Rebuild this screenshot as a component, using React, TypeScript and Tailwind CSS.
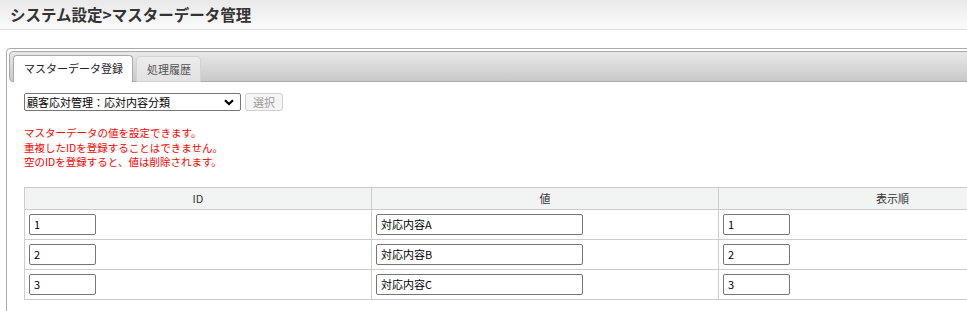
import React from "react";

const rows = [
  { id: "1", value: "対応内容A", order: "1" },
  { id: "2", value: "対応内容B", order: "2" },
  { id: "3", value: "対応内容C", order: "3" },
];

const font = { fontFamily: '"Noto Sans CJK JP", "Noto Sans", sans-serif' };

export default function App() {
  return (
    <div className="w-[967px] h-[311px] overflow-hidden bg-white text-[#222]" style={font}>
      <div className="h-[30px] border-b border-[#dddddd] bg-gradient-to-b from-[#e9e9e9] to-[#fbfbfb] pl-[10px] flex items-center">
        <h1 className="text-[15.5px] font-bold text-[#333] leading-none">
          システム設定&gt;マスターデータ管理
        </h1>
      </div>

      <div className="mt-[18px] ml-[6px] w-[1080px] h-[300px] border border-[#aaaaaa] rounded-[4px] p-[2px]">
        <div className="h-[31px] border border-[#aaaaaa] rounded-[4px] bg-gradient-to-b from-[#e8e8e8] to-[#c9c9c9] flex items-end gap-[3px] pl-[3px]">
          <div className="mb-[-1px] h-[27px] w-[120px] border border-[#aaaaaa] border-b-0 rounded-t-[4px] bg-white flex items-center pl-[10px] pb-[1px] text-[11px] text-[#222]">
            マスターデータ登録
          </div>
          <div className="mb-[-1px] h-[26px] w-[65px] border border-[#d3d3d3] rounded-t-[4px] bg-gradient-to-b from-[#ececec] to-[#e2e2e2] flex items-center pl-[10px] text-[11px] text-[#555]">
            処理履歴
          </div>
        </div>

        <div className="pl-[15px] pt-[11px]">
          <div className="flex items-center gap-[4px]">
            <div className="relative w-[217px] h-[18px] border border-[#767676] rounded-[2px] bg-white flex items-center pl-[2px] text-[11px] text-black leading-[16px]">
              <span>顧客応対管理：応対内容分類</span>
              <svg
                className="absolute right-[6px] top-[5px] pointer-events-none"
                width="10"
                height="7"
                viewBox="0 0 10 7"
              >
                <path d="M1 1.2 L5 5 L9 1.2" fill="none" stroke="#000" strokeWidth="2.2" />
              </svg>
            </div>
            <button
              className="w-[38px] h-[18px] border border-[#d0d0d0] rounded-[3px] bg-[#f5f5f5] text-[11px] text-[#9a9a9a] leading-[16px]"
              style={font}
            >
              選択
            </button>
          </div>

          <div className="mt-[15px] text-[10.5px] leading-[14.5px] text-[#ff0000]">
            <p>マスターデータの値を設定できます。</p>
            <p>重複したIDを登録することはできません。</p>
            <p>空のIDを登録すると、値は削除されます。</p>
          </div>

          <table className="mt-[17px] w-[1042px] table-fixed border-collapse text-[11px] text-[#333]">
            <colgroup>
              <col className="w-[347px]" />
              <col className="w-[347px]" />
              <col className="w-[348px]" />
            </colgroup>
            <thead>
              <tr className="h-[22px] bg-[#f2f3f3]">
                <th className="border border-[#cccccc] font-normal">ID</th>
                <th className="border border-[#cccccc] font-normal">値</th>
                <th className="border border-[#cccccc] font-normal">表示順</th>
              </tr>
            </thead>
            <tbody>
              {rows.map((r) => (
                <tr key={r.id} className="h-[30px]">
                  <td className="border border-[#cccccc] pl-[4px]">
                    <input
                      readOnly
                      value={r.id}
                      className="w-[67px] h-[21px] border border-[#767676] rounded-[2px] pl-[4px] text-[11px] text-black"
                      style={font}
                    />
                  </td>
                  <td className="border border-[#cccccc] pl-[4px]">
                    <input
                      readOnly
                      value={r.value}
                      className="w-[207px] h-[21px] border border-[#767676] rounded-[2px] pl-[4px] text-[11px] text-black"
                      style={font}
                    />
                  </td>
                  <td className="border border-[#cccccc] pl-[4px]">
                    <input
                      readOnly
                      value={r.order}
                      className="w-[67px] h-[21px] border border-[#767676] rounded-[2px] pl-[4px] text-[11px] text-black"
                      style={font}
                    />
                  </td>
                </tr>
              ))}
            </tbody>
          </table>
        </div>
      </div>
    </div>
  );
}
